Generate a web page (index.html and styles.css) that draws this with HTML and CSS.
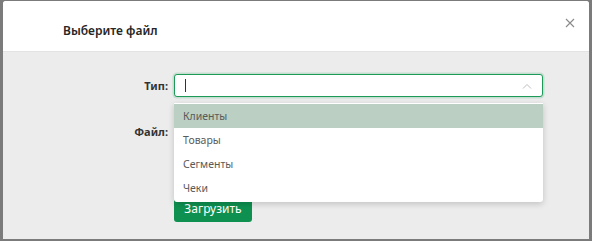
FILE: index.html
```html
<!DOCTYPE html>
<html lang="ru">
<head>
<meta charset="utf-8">
<link rel="stylesheet" href="styles.css">
</head>
<body>
<div class="modal">
  <div class="modal-header">
    <div class="modal-title">Выберите файл</div>
    <button class="close" aria-label="Закрыть">
      <svg width="10" height="10" viewBox="0 0 10 10"><path d="M1 1L9 9M9 1L1 9" stroke="#8a8a8a" stroke-width="1.1" fill="none"/></svg>
    </button>
  </div>
  <div class="modal-body">
    <div class="row">
      <label class="label">Тип:</label>
      <div class="field">
        <div class="select">
          <span class="caret"></span>
          <svg class="chevron" width="10" height="6" viewBox="0 0 10 6"><path d="M1 5.5L5 1.5L9 5.5" stroke="#bdbdbd" stroke-width="1" fill="none"/></svg>
        </div>
        <ul class="dropdown">
          <li class="item active">Клиенты</li>
          <li class="item">Товары</li>
          <li class="item">Сегменты</li>
          <li class="item">Чеки</li>
        </ul>
      </div>
    </div>
    <div class="row row-file">
      <label class="label">Файл:</label>
      <div class="field">
        <div class="file-input"></div>
      </div>
    </div>
    <div class="row row-btn">
      <span class="label"></span>
      <button class="btn">Загрузить</button>
    </div>
  </div>
</div>
</body>
</html>
```
FILE: styles.css
```css
html, body {
  margin: 0;
  padding: 0;
}
body {
  background: #7b7b7b;
  width: 592px;
  height: 241px;
  overflow: hidden;
  font-family: "Noto Sans", "Open Sans", sans-serif;
}
.modal {
  margin: 1px 3px 0 3px;
  height: 238px;
  background: #ececec;
  border-radius: 3px 3px 0 0;
  display: flex;
  flex-direction: column;
  overflow: hidden;
}
.modal-header {
  background: #fff;
  height: 50px;
  border-bottom: 1px solid #e3e3e3;
  display: flex;
  align-items: center;
  justify-content: space-between;
  padding: 0 14px 0 60px;
  flex-shrink: 0;
}
.modal-title {
  font-size: 12px;
  font-weight: 600;
  color: #262626;
  margin-top: 9px;
}
.close {
  background: none;
  border: 0;
  padding: 0;
  width: 10px;
  height: 10px;
  display: flex;
  margin-top: -6px;
}
.modal-body {
  flex: 1;
  padding-top: 22px;
  display: flex;
  flex-direction: column;
}
.row {
  display: flex;
  align-items: center;
  gap: 6px;
}
.label {
  width: 165px;
  text-align: right;
  font-size: 11px;
  font-weight: 700;
  color: #333;
  flex-shrink: 0;
}
.field {
  position: relative;
  width: 369px;
}
.select {
  height: 23px;
  box-sizing: border-box;
  border: 1px solid #1d9a57;
  border-radius: 3px;
  background: #fff;
  box-shadow: 0 0 0 1.5px rgba(29,154,87,0.18);
  display: flex;
  align-items: center;
  justify-content: space-between;
  padding: 0 10px 0 10px;
}
.caret {
  width: 1px;
  height: 13px;
  background: #333;
}
.chevron {
  display: block;
}
.dropdown {
  position: absolute;
  left: 0;
  right: 0;
  top: 29px;
  margin: 0;
  padding: 1px 0 2px;
  list-style: none;
  background: #fff;
  border-radius: 0 0 3px 3px;
  box-shadow: 0 2px 6px rgba(0,0,0,0.18);
  z-index: 5;
}
.item {
  height: 24px;
  line-height: 24px;
  padding-left: 9px;
  font-size: 10.5px;
  color: #5a5a5a;
}
.item.active {
  background: #bbcfc2;
}
.row-file {
  margin-top: 22px;
}
.file-input {
  height: 24px;
}
.row-btn {
  margin-top: 51px;
}
.btn {
  background: #0e9150;
  color: #fff;
  border: 0;
  border-radius: 3px;
  height: 28px;
  width: 78px;
  font-family: inherit;
  font-size: 12px;
  padding: 0;
  padding-top: 1px;
}
```
